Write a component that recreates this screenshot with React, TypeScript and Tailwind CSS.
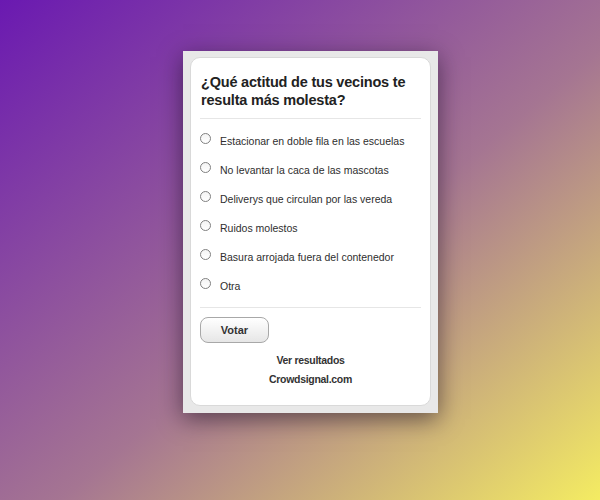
import { useState } from "react";

const options = [
  "Estacionar en doble fila en las escuelas",
  "No levantar la caca de las mascotas",
  "Deliverys que circulan por las vereda",
  "Ruidos molestos",
  "Basura arrojada fuera del contenedor",
  "Otra",
];

export default function App() {
  const [choice, setChoice] = useState<number | null>(null);

  return (
    <div
      className="w-[600px] h-[500px] pl-[183px] pt-[51px] bg-[linear-gradient(to_bottom_right,#6a19b1_0%,#a57592_55%,#f4ec62_100%)]"
      style={{ fontFamily: '"Liberation Sans", Arial, sans-serif' }}
    >
      <div className="w-[255px] h-[362px] bg-[#e8e8e8] px-[7px] pt-[6px] pb-[7px] shadow-[0_6px_22px_rgba(20,10,30,0.55)]">
        <div className="h-full rounded-[10px] bg-white border border-[#d9d9d9] px-[9px] pt-[15px]">
          <h1 className="pl-[1px] text-[14.5px] leading-[18px] tracking-[-0.2px] font-bold text-[#222] pb-[9px] border-b border-[#e6e6e6]">
            ¿Qué actitud de tus vecinos te resulta más molesta?
          </h1>
          <ul className="pt-[14px] border-b border-[#e6e6e6]">
            {options.map((o, i) => (
              <li key={o} className="h-[29px] flex items-start">
                <button
                  onClick={() => setChoice(i)}
                  className="flex items-start gap-[9px] text-left"
                >
                  <span className="w-[11px] h-[11px] rounded-full border border-[#808080] bg-[linear-gradient(#f4f4f4,#ffffff)] flex items-center justify-center shrink-0">
                    {choice === i && <span className="w-[5px] h-[5px] rounded-full bg-[#333]" />}
                  </span>
                  <span className="text-[10.5px] leading-[13px] text-[#2e2e2e] mt-[2px]">{o}</span>
                </button>
              </li>
            ))}
          </ul>
          <div className="pt-[9px]">
            <button className="w-[69px] h-[26px] rounded-[8px] border border-[#a8a8a8] bg-[linear-gradient(#ffffff,#e6e6e6)] text-[11px] font-bold text-[#333]">
              Votar
            </button>
          </div>
          <div className="mt-[11px] flex flex-col items-center gap-[7px] text-[10.5px] leading-[12px] tracking-[-0.3px] font-bold text-[#333]">
            <span>Ver resultados</span>
            <span>Crowdsignal.com</span>
          </div>
        </div>
      </div>
    </div>
  );
}
